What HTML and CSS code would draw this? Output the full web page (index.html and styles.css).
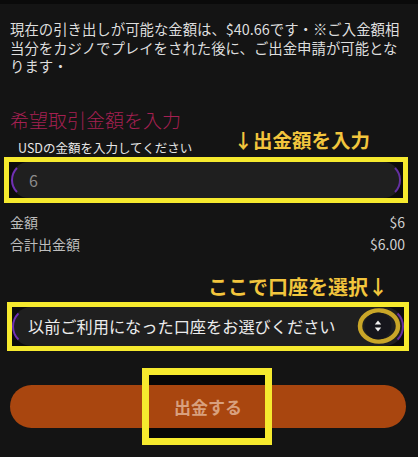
FILE: index.html
```html
<!DOCTYPE html>
<html lang="ja">
<head>
<meta charset="utf-8">
<link rel="stylesheet" href="styles.css">
</head>
<body>
<div class="page">
  <p class="notice">現在の引き出しが可能な金額は、$40.66です・※ご入金額相当分をカジノでプレイをされた後に、ご出金申請が可能となります・</p>

  <h2 class="heading">希望取引金額を入力</h2>

  <div class="label-row">
    <span class="label">USDの金額を入力してください</span>
    <span class="note note-input">↓出金額を入力</span>
  </div>

  <div class="hl hl-input">
    <div class="pill amount">6</div>
  </div>

  <div class="summary">
    <div class="row"><span>金額</span><span class="val">$6</span></div>
    <div class="row"><span>合計出金額</span><span class="val">$6.00</span></div>
  </div>

  <div class="note note-select">ここで口座を選択↓</div>

  <div class="hl hl-select">
    <div class="pill select">
      <span class="select-text">以前ご利用になった口座をお選びください</span>
      <span class="select-icon">
        <svg width="44" height="36" viewBox="0 0 44 36">
          <ellipse cx="22" cy="18" rx="19" ry="15.5" fill="none" stroke="#c9a628" stroke-width="4.5"/>
          <circle cx="21" cy="18" r="13.5" fill="#16161c"/>
          <path d="M21 12.5 L24.2 16.5 L17.8 16.5 Z" fill="#f2f2f2"/>
          <path d="M21 23.5 L24.2 19.5 L17.8 19.5 Z" fill="#f2f2f2"/>
        </svg>
      </span>
    </div>
  </div>

  <div class="submit-wrap">
    <div class="hl-fill"></div>
    <button class="submit">出金する</button>
    <div class="hl-frame"></div>
  </div>
</div>
</body>
</html>
```

FILE: styles.css
```css
html, body {
  margin: 0;
  padding: 0;
  background: #141414;
}
body {
  border-top: 4px solid #0a0a0a;
  font-family: "Noto Sans CJK JP", "Noto Sans", sans-serif;
  color: #dcdcdc;
}
.page {
  padding: 0 10px 27px 10px;
  width: 398px;
}
.notice {
  margin: 16px 0 0 0;
  font-size: 14.4px;
  line-height: 18.5px;
  color: #dedede;
}
.heading {
  margin: 32px 0 0 0;
  font-size: 19px;
  line-height: 24px;
  font-weight: 300;
  color: #a52052;
}
.label-row {
  display: flex;
  align-items: flex-start;
  height: 25px;
}
.label {
  margin: 8px 0 0 8px;
  font-size: 12.5px;
  line-height: 16px;
  color: #e6e6e6;
}
.note {
  color: #f2c53d;
  font-weight: 700;
  font-size: 19.5px;
}
.note-input {
  margin: 0 38px 0 auto;
  line-height: 16px;
}
.hl {
  border: 5px solid #f6ea2e;
  background: #0c0c0c;
  padding: 0 2px;
}
.hl-input {
  margin-left: -6px;
}
.pill {
  background: #1f1f1f;
  border: 2px solid transparent;
  border-left-color: #7030b4;
  border-right-color: #6430a0;
  border-radius: 20px;
  box-sizing: border-box;
}
.amount {
  height: 36px;
  padding-left: 16px;
  font-size: 16px;
  line-height: 32px;
  color: #8c8c8c;
}
.summary {
  margin-top: 8px;
}
.row {
  display: flex;
  justify-content: space-between;
  font-size: 14px;
  line-height: 22.5px;
  color: #bdbdbd;
}
.row .val {
  color: #d0d0d0;
  padding-right: 3px;
}
.note-select {
  margin-top: 19px;
  line-height: 24px;
  text-align: right;
  padding-right: 20px;
  font-size: 20px;
}
.hl-select {
  margin: 3px -1px 0 -3px;
  padding: 0;
}
.select {
  height: 39px;
  display: flex;
  align-items: center;
  padding: 0 0 0 14px;
}
.select-text {
  flex: 1;
  font-size: 16.2px;
  color: #ececec;
  white-space: nowrap;
}
.select-icon {
  display: flex;
  margin-right: 1px;
}
.submit-wrap {
  position: relative;
  margin-top: 34px;
  height: 43px;
}
.submit {
  position: relative;
  z-index: 1;
  display: block;
  width: 396px;
  height: 43px;
  border: none;
  border-radius: 22px;
  background: #a9460f;
  color: #d8a07e;
  font-family: "Noto Sans CJK JP", "Noto Sans", sans-serif;
  font-weight: 700;
  font-size: 17px;
  padding: 0;
  margin: 0;
}
.hl-fill, .hl-frame {
  position: absolute;
  left: 132px;
  top: -17px;
  width: 130px;
  height: 77px;
  box-sizing: border-box;
  border: 7px solid transparent;
}
.hl-fill {
  z-index: 0;
  background: #070707;
}
.hl-frame {
  z-index: 2;
  border-color: #f6ea2e;
}
```
